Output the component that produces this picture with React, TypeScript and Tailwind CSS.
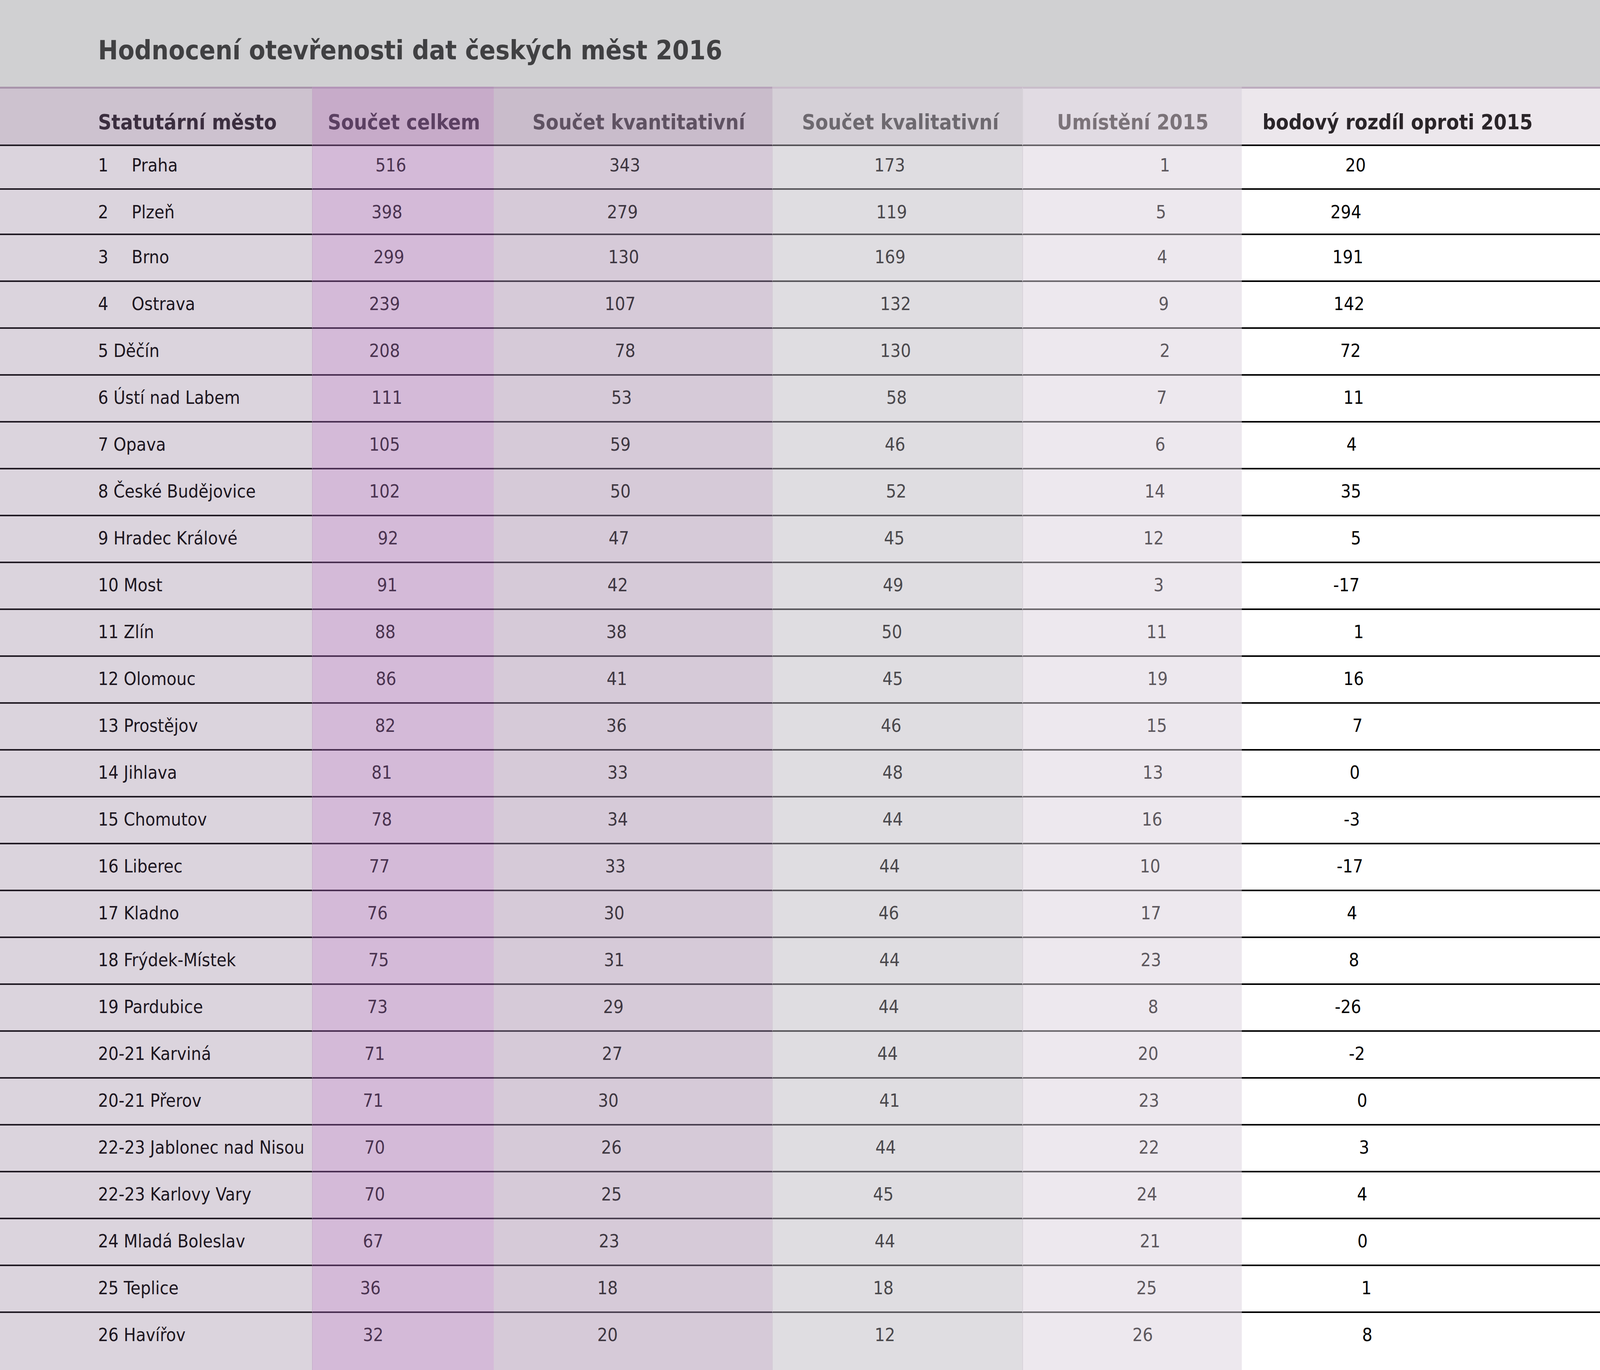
import React from 'react'

type Row = {
  no: string
  city: string
  gap?: boolean
  v: [number, number, number, number, number]
  // left offset of each number inside its column; the source sheet is aligned by hand
  x: [number, number, number, number, number]
}

const rows: Row[] = [
  { no: '1', city: 'Praha', gap: true, v: [516, 343, 173, 1, 20], x: [162, 296, 261, 352, 265] },
  { no: '2', city: 'Plzeň', gap: true, v: [398, 279, 119, 5, 294], x: [152, 290, 266, 342, 227] },
  { no: '3', city: 'Brno', gap: true, v: [299, 130, 169, 4, 191], x: [157, 293, 262, 345, 232] },
  { no: '4', city: 'Ostrava', gap: true, v: [239, 107, 132, 9, 142], x: [146, 284, 276, 349, 235] },
  { no: '5', city: 'Děčín', v: [208, 78, 130, 2, 72], x: [146, 310, 276, 352, 252] },
  { no: '6', city: 'Ústí nad Labem', v: [111, 53, 58, 7, 11], x: [152, 301, 292, 344, 260] },
  { no: '7', city: 'Opava', v: [105, 59, 46, 6, 4], x: [146, 298, 288, 340, 268] },
  { no: '8', city: 'České Budějovice', v: [102, 50, 52, 14, 35], x: [146, 298, 291, 313, 253] },
  { no: '9', city: 'Hradec Králové', v: [92, 47, 45, 12, 5], x: [168, 294, 286, 310, 279] },
  { no: '10', city: 'Most', v: [91, 42, 49, 3, -17], x: [166, 291, 283, 336, 234] },
  { no: '11', city: 'Zlín', v: [88, 38, 50, 11, 1], x: [161, 288, 280, 318, 286] },
  { no: '12', city: 'Olomouc', v: [86, 41, 45, 19, 16], x: [163, 289, 282, 320, 260] },
  { no: '13', city: 'Prostějov', v: [82, 36, 46, 15, 7], x: [161, 288, 278, 318, 283] },
  { no: '14', city: 'Jihlava', v: [81, 33, 48, 13, 0], x: [152, 291, 282, 308, 276] },
  { no: '15', city: 'Chomutov', v: [78, 34, 44, 16, -3], x: [152, 291, 282, 306, 261] },
  { no: '16', city: 'Liberec', v: [77, 33, 44, 10, -17], x: [146, 285, 274, 301, 243] },
  { no: '17', city: 'Kladno', v: [76, 30, 46, 17, 4], x: [141, 282, 272, 303, 269] },
  { no: '18', city: 'Frýdek-Místek', v: [75, 31, 44, 23, 8], x: [144, 282, 274, 303, 274] },
  { no: '19', city: 'Pardubice', v: [73, 29, 44, 8, -26], x: [141, 280, 272, 322, 238] },
  { no: '20-21', city: 'Karviná', v: [71, 27, 44, 20, -2], x: [134, 277, 269, 296, 274] },
  { no: '20-21', city: 'Přerov', v: [71, 30, 41, 23, 0], x: [130, 267, 274, 298, 295] },
  { no: '22-23', city: 'Jablonec nad Nisou', v: [70, 26, 44, 22, 3], x: [134, 275, 264, 298, 300] },
  { no: '22-23', city: 'Karlovy Vary', v: [70, 25, 45, 24, 4], x: [134, 275, 258, 293, 295] },
  { no: '24', city: 'Mladá Boleslav', v: [67, 23, 44, 21, 0], x: [130, 269, 262, 301, 296] },
  { no: '25', city: 'Teplice', v: [36, 18, 18, 25, 1], x: [123, 265, 258, 292, 306] },
  { no: '26', city: 'Havířov', v: [32, 20, 12, 26, 8], x: [130, 265, 262, 282, 308] },
]

const numCols = [
  'w-[465px] bg-[#d4bad8] border-[#4a2f52] text-[#4a3350] border-l border-l-[#bea5c2]',
  'w-[713px] bg-[#d6cad8] border-[#4a4050] text-[#3e3741]',
  'w-[640px] bg-[#dfdde1] border-[#58565b] text-[#4a484c] border-l border-l-[#d0c8d2]',
  'w-[562px] bg-[#ede8ee] border-[#6b676c] text-[#5d585e] border-l-2 border-l-[#d8d3da]',
  'flex-1 bg-white border-black text-black',
]
const borderL = [1, 0, 1, 2, 0]

function rowLayout(i: number) {
  if (i === 0) return { row: 'h-[112px]', cell: 'border-b-4 pt-[26px]' }
  if (i === 1) return { row: 'h-[116px]', cell: 'border-b-4 pt-[34px]' }
  if (i === rows.length - 1) return { row: 'flex-1', cell: 'pt-[33px]' }
  return { row: 'h-[120px]', cell: 'border-b-4 pt-[33px]' }
}

function DataRow({ r, i }: { r: Row; i: number }) {
  const { row, cell } = rowLayout(i)
  return (
    <div className={`flex ${row}`}>
      <div className={`w-[799px] bg-[#dbd4dd] border-[#211b24] text-[#1c1620] pl-[251px] whitespace-nowrap ${cell}`}>
        {r.gap ? (
          <>
            <span className="inline-block w-[86px]">{r.no}</span>
            {r.city}
          </>
        ) : (
          `${r.no} ${r.city}`
        )}
      </div>
      {r.v.map((val, c) => (
        <div key={c} className={`${numCols[c]} ${cell}`} style={{ paddingLeft: r.x[c] - borderL[c] }}>
          {val}
        </div>
      ))}
    </div>
  )
}

export default function App() {
  return (
    <div className="w-screen h-screen overflow-hidden flex flex-col font-['DejaVu_Sans',Verdana,sans-serif] font-stretch-condensed leading-none">
      <div className="h-[222px] shrink-0 bg-[#d0d0d2] pl-[251px] pt-[95px]">
        <h1 className="text-[68px] font-bold text-[#404042]">Hodnocení otevřenosti dat českých měst 2016</h1>
      </div>

      <div className="flex h-[152px] shrink-0 text-[53px] font-bold whitespace-nowrap">
        <div className="w-[799px] bg-[#cdc2cf] border-t-5 border-t-[#a894ab] border-b-4 border-b-[#231d26] text-[#3b2e3f] pl-[251px] pt-[59px]">
          Statutární město
        </div>
        <div className="w-[465px] bg-[#c7abc9] border-t-5 border-t-[#b394b8] border-b-4 border-b-[#4c3352] border-l border-l-[#bea8c2] text-[#5b4062] pl-[39px] pt-[59px]">
          Součet celkem
        </div>
        <div className="w-[713px] bg-[#c9bccb] border-t-5 border-t-[#b7a2ba] border-b-4 border-b-[#4a3f4e] text-[#5f5262] pl-[99px] pt-[59px]">
          Součet kvantitativní
        </div>
        <div className="w-[640px] bg-[#d5d0d7] border-t-5 border-t-[#c9bcca] border-b-4 border-b-[#555357] border-l border-l-[#cec6d0] text-[#6d696f] pl-[75px] pt-[59px]">
          Součet kvalitativní
        </div>
        <div className="w-[562px] bg-[#e1dbe3] border-t-5 border-t-[#c9bdca] border-b-4 border-b-[#666267] border-l-2 border-l-[#d8d2da] text-[#7b7379] pl-[87px] pt-[59px]">
          Umístění 2015
        </div>
        <div className="flex-1 bg-[#ece7ec] border-t-5 border-t-[#bcabbe] border-b-4 border-b-black text-[#2a2529] pl-[53px] pt-[59px]">
          bodový rozdíl oproti 2015
        </div>
      </div>

      <div className="flex flex-col flex-1 text-[46px]">
        {rows.map((r, i) => (
          <DataRow key={i} r={r} i={i} />
        ))}
      </div>
    </div>
  )
}
